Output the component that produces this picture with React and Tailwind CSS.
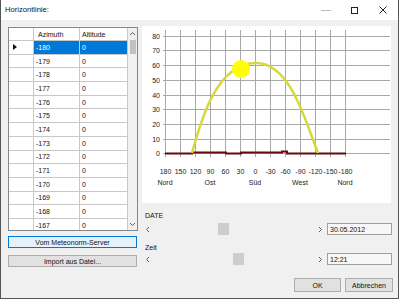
const rows = Array.from({ length: 14 }, (_, i) => -180 + i);
const yVals = [80, 70, 60, 50, 40, 30, 20, 10, 0];
const xLabels = ["180", "150", "120", "90", "60", "30", "0", "-30", "-60", "-90", "-120", "-150", "-180"];
const dirs = [
  { x: 165, label: "Nord" },
  { x: 210, label: "Ost" },
  { x: 255, label: "Süd" },
  { x: 300, label: "West" },
  { x: 345, label: "Nord" },
];

const Chevron = ({ dir }) => {
  const d = {
    up: "M1 4L3.5 1.5L6 4",
    down: "M1 2L3.5 4.5L6 2",
    left: "M4 1L1.5 3.5L4 6",
    right: "M2 1L4.5 3.5L2 6",
  }[dir];
  return (
    <svg width="7" height="7" viewBox="0 0 7 7" fill="none" stroke="#606060" strokeWidth="1">
      <path d={d} />
    </svg>
  );
};

const HScroll = ({ thumb }) => (
  <div className="relative flex items-center justify-between w-[184px] h-[12px] bg-[#f0f0f0]">
    <div className="w-[12px] flex justify-center">
      <Chevron dir="left" />
    </div>
    <div className={`absolute top-0 h-[12px] w-[11px] bg-[#cdcdcd] ${thumb}`} />
    <div className="w-[12px] flex justify-center">
      <Chevron dir="right" />
    </div>
  </div>
);

const Chart = () => (
  <svg width="249" height="177" viewBox="142 26 249 177" className="block">
    {yVals.map((v) => {
      const y = Math.round(153.3 - v * 1.47) + 0.5;
      return (
        <g key={v}>
          <line x1="163" x2="390" y1={y} y2={y} stroke="#a8a8a8" shapeRendering="crispEdges" />
          <text x="160" y={y + 2.5} textAnchor="end" fontSize="7" fill="#222">
            {v}
          </text>
        </g>
      );
    })}
    {xLabels.map((lab, i) => {
      const x = 165 + 15 * i + 0.5;
      return (
        <g key={i}>
          <line x1={x} x2={x} y1="30" y2="157" stroke="#a8a8a8" shapeRendering="crispEdges" />
          <text x={x} y="173.5" textAnchor="middle" fontSize="7" fill="#222">
            {lab}
          </text>
        </g>
      );
    })}
    {dirs.map((d, i) => (
      <text key={i} x={d.x} y="184.5" textAnchor="middle" fontSize="7" fill="#222">
        {d.label}
      </text>
    ))}
    {/* horizon */}
    <polyline
      points="165,153.5 192,153.5 192,152.5 226,152.5 226,153.5 241,153.5 241,152.5 282,152.5 282,151.5 287,151.5 287,153.5 346,153.5"
      fill="none"
      stroke="#6a0a0a"
      strokeWidth="2"
    />
    {/* sun path */}
    <path
      d="M192,153 C200,125 215,64 255,63 C290,62 305,120 318,153"
      fill="none"
      stroke="#d8d83a"
      strokeWidth="2.5"
    />
    <circle cx="241" cy="69" r="9" fill="#ffff00" />
  </svg>
);

export default function App() {
  return (
    <div className="w-[399px] h-[299px] bg-[#f0f0f0] border-l border-r border-b border-[#555] flex flex-col [font-family:'Liberation_Sans',Arial,sans-serif] text-[7px] text-[#111] leading-none">
      {/* title bar */}
      <div className="h-[20px] bg-white flex items-center">
        <div className="pl-[4px] text-[7.6px] flex-1">Horizontlinie:</div>
        <div className="flex items-center h-full">
          <div className="w-[28px] flex justify-center">
            <div className="w-[10px] h-px bg-[#bbb]" />
          </div>
          <div className="w-[28px] flex justify-center">
            <div className="w-[7px] h-[7px] border border-[#222]" />
          </div>
          <div className="w-[30px] flex justify-center">
            <svg width="8" height="8" viewBox="0 0 8 8" stroke="#222" strokeWidth="1">
              <path d="M0.5 0.5L7.5 7.5M7.5 0.5L0.5 7.5" />
            </svg>
          </div>
        </div>
      </div>

      {/* body */}
      <div className="flex flex-1">
        {/* left column */}
        <div className="flex flex-col w-[130px] ml-[7px] mt-[7px]">
          <div className="h-[204px] border border-[#828790] bg-white flex overflow-hidden">
            <div className="flex flex-col w-[119px]">
              <div className="flex h-[13px] shrink-0 border-b border-[#c8c8c8]">
                <div className="w-[25px] border-r border-[#c8c8c8]" />
                <div className="w-[46px] border-r border-[#c8c8c8] pl-[4px] flex items-center">Azimuth</div>
                <div className="w-[48px] border-r border-[#c8c8c8] pl-[2px] flex items-center">Altitude</div>
              </div>
              {rows.map((r, i) => {
                const sel = i === 0;
                return (
                  <div key={r} className="flex h-[13.7px] shrink-0 border-b border-[#c8c8c8]">
                    <div className="w-[25px] border-r border-[#c8c8c8] flex items-center pl-[4px]">
                      {sel && (
                        <svg width="4" height="6" viewBox="0 0 4 6">
                          <path d="M0 0L4 3L0 6Z" fill="#111" />
                        </svg>
                      )}
                    </div>
                    <div
                      className={`w-[46px] border-r border-[#c8c8c8] pl-[2px] flex items-center ${
                        sel ? "bg-[#0078d7] text-white" : ""
                      }`}
                    >
                      {r}
                    </div>
                    <div
                      className={`w-[48px] border-r border-[#c8c8c8] pl-[2px] flex items-center ${
                        sel ? "bg-[#0078d7] text-white" : ""
                      }`}
                    >
                      0
                    </div>
                  </div>
                );
              })}
            </div>
            {/* vertical scrollbar */}
            <div className="w-[9px] bg-[#f0f0f0] flex flex-col items-center">
              <div className="h-[12px] flex items-center">
                <Chevron dir="up" />
              </div>
              <div className="w-[6px] h-[14px] bg-[#c1c1c1]" />
              <div className="flex-1" />
              <div className="h-[12px] flex items-center">
                <Chevron dir="down" />
              </div>
            </div>
          </div>
          <button className="mt-[5px] h-[12px] w-[129px] border border-[#0078d7] bg-[#e5f1fb] flex items-center justify-center">
            Vom Meteonorm-Server
          </button>
          <button className="mt-[7px] h-[12px] w-[129px] border border-[#adadad] bg-[#e1e1e1] flex items-center justify-center">
            Import aus Datei...
          </button>
        </div>

        {/* right column */}
        <div className="flex flex-col w-[251px] ml-[4px] mt-[6px]">
          <div className="w-[249px] h-[177px] bg-white">
            <Chart />
          </div>
          <div className="mt-[6px] h-[12px] pl-[3px] flex items-center">DATE</div>
          <div className="mt-[2px] flex items-center gap-[1px]">
            <HScroll thumb="left-[76px]" />
            <div className="w-[65px] h-[12px] border border-[#a0a0a0] bg-[#f7f7f7] pl-[2px] flex items-center">
              30.05.2012
            </div>
          </div>
          <div className="mt-[6px] h-[12px] pl-[3px] flex items-center">Zeit</div>
          <div className="flex items-center gap-[1px]">
            <HScroll thumb="left-[91px]" />
            <div className="w-[65px] h-[12px] border border-[#a0a0a0] bg-[#f7f7f7] pl-[2px] flex items-center">
              12:21
            </div>
          </div>
          <div className="mt-[13px] flex justify-end gap-[4px]">
            <button className="w-[47px] h-[14px] border border-[#adadad] bg-[#e1e1e1] flex items-center justify-center">
              OK
            </button>
            <button className="w-[48px] h-[14px] border border-[#adadad] bg-[#e1e1e1] flex items-center justify-center">
              Abbrechen
            </button>
          </div>
        </div>
      </div>
    </div>
  );
}
